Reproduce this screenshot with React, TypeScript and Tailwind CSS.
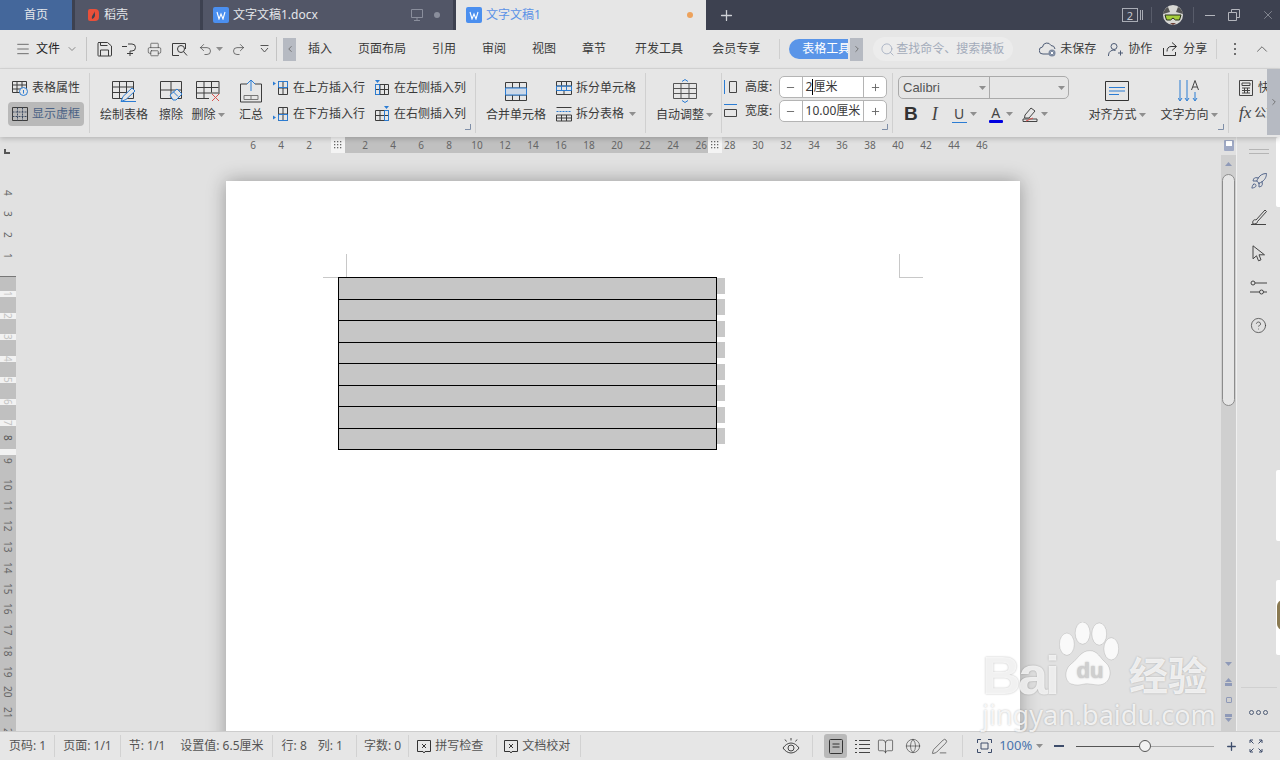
import type { ReactNode } from 'react'
import {
  BookOpen,
  ChevronDown,
  ChevronLeft,
  ChevronRight,
  ChevronUp,
  CircleHelp,
  Globe,
  Menu,
  Minus,
  PenLine,
  Plus,
  Printer,
  Redo2,
  Rocket,
  Search,
  Undo2,
  X,
} from 'lucide-react'

const ink = '#3c3c3c'
const blue = '#2b7cd3'

function Svg({ w = 16, h = 16, children }: { w?: number; h?: number; children: ReactNode }) {
  return (
    <svg width={w} height={h} viewBox={`0 0 ${w} ${h}`} fill="none" stroke={ink} strokeWidth="1" className="shrink-0">
      {children}
    </svg>
  )
}

function Caret({ className = '' }: { className?: string }) {
  return (
    <svg width="7" height="4" viewBox="0 0 7 4" className={`shrink-0 ${className}`}>
      <path d="M0 0h7L3.5 4z" fill="#8f8f8f" />
    </svg>
  )
}

function Launcher() {
  return (
    <svg width="6" height="6" viewBox="0 0 6 6" fill="none" stroke="#7f8fa8" className="absolute right-[4px] bottom-[3px]">
      <path d="M5.5 0v5.5H0" />
    </svg>
  )
}

function LargeTool({ width, icon, label, caret }: { width: string; icon: ReactNode; label: string; caret?: boolean }) {
  return (
    <div className={`${width} flex h-full shrink-0 flex-col items-center pt-[6px]`}>
      <div className="flex h-[24px] items-center">{icon}</div>
      <div className="mt-[3px] flex h-[18px] items-center gap-[2px] whitespace-nowrap">
        {label}
        {caret && <Caret />}
      </div>
    </div>
  )
}

function SmallTool({ icon, label, caret }: { icon: ReactNode; label: string; caret?: boolean }) {
  return (
    <div className="flex h-[20px] items-center gap-[4px] whitespace-nowrap">
      {icon}
      {label}
      {caret && <Caret className="ml-[1px]" />}
    </div>
  )
}

function Stepper({ value, cursor }: { value: string; cursor?: boolean }) {
  return (
    <div className="flex h-[22px] w-[108px] items-stretch rounded-[5px] border border-[#b4b4b4] bg-white">
      <div className="flex w-[23px] items-center justify-center border-r border-[#b4b4b4]">
        <Minus size={11} color="#666" strokeWidth={2} />
      </div>
      <div className="flex w-[62px] items-center pl-[3px] whitespace-nowrap">
        {cursor ? (
          <>
            2<span className="h-[16px] w-px bg-black" />
            厘米
          </>
        ) : (
          value
        )}
      </div>
      <div className="flex w-[23px] items-center justify-center border-l border-[#b4b4b4]">
        <Plus size={11} color="#666" strokeWidth={2} />
      </div>
    </div>
  )
}

function TabLogo() {
  return (
    <span className="flex h-[16px] w-[16px] shrink-0 items-center justify-center rounded-[2px] bg-[#4b8fef]">
      <svg width="10" height="9" viewBox="0 0 10 9" fill="none" stroke="white" strokeWidth="1.1">
        <path d="M1 1l2 7 2-5 2 5 2-7" />
      </svg>
    </span>
  )
}

function InsertRow({ below }: { below?: boolean }) {
  return (
    <Svg>
      <path d="M5.5 1.5h9v13h-9z" />
      <path d="M5.5 8h9M10 1.5v13" />
      {below ? (
        <>
          <path d="M5.5 8.5h9v6h-9z" stroke={blue} />
          <path d="M0 9.5l3 2-3 2z" fill={blue} stroke="none" />
        </>
      ) : (
        <>
          <path d="M5.5 1.5h9v6h-9z" stroke={blue} />
          <path d="M0 1.5l3 2-3 2z" fill={blue} stroke="none" />
        </>
      )}
    </Svg>
  )
}

function InsertCol({ right }: { right?: boolean }) {
  return (
    <Svg>
      <path d="M1.5 4.5h13v10h-13z" />
      <path d="M1.5 9.5h13M6 4.5v10M10.5 4.5v10" />
      {right ? (
        <>
          <path d="M10.5 4.5h4v10h-4z" stroke={blue} />
          <path d="M10 0h5l-2.500 3z" fill={blue} stroke="none" />
        </>
      ) : (
        <>
          <path d="M1.5 4.5h4v10h-4z" stroke={blue} />
          <path d="M1 0h5L3.500 3z" fill={blue} stroke="none" />
        </>
      )}
    </Svg>
  )
}

const topTicks = [6, 4, 2]
const bandTicks = [2, 4, 6, 8, 10, 12, 14, 16, 18, 20, 22, 24]
const endTicks = [30, 32, 34, 36, 38, 40, 42, 44, 46]

function GripCell({ width }: { width: string }) {
  return (
    <div className={`${width} flex h-full items-center justify-center bg-[#f4f4f4]`}>
      <svg width="8" height="8" viewBox="0 0 8 8" fill="#666">
        {[0, 3, 6].map((y) => [0, 3, 6].map((x) => <rect key={`${x}-${y}`} x={x} y={y} width="1.300" height="1.300" />))}
      </svg>
    </div>
  )
}

const stripes: { h: number; grey: boolean; label?: string }[] = [
  { h: 14, grey: true },
  { h: 6, grey: false, label: '1' },
  { h: 16, grey: true },
  { h: 6, grey: false, label: '2' },
  { h: 15, grey: true },
  { h: 6, grey: false, label: '3' },
  { h: 16, grey: true },
  { h: 6, grey: false, label: '4' },
  { h: 15, grey: true },
  { h: 6, grey: false, label: '5' },
  { h: 16, grey: true },
  { h: 6, grey: false, label: '6' },
  { h: 15, grey: true },
  { h: 6, grey: false, label: '7' },
  { h: 23, grey: true, label: '8' },
  { h: 6, grey: false },
]

const lowerTicks = [9, 10, 11, 12, 13, 14, 15, 16, 17, 18, 19, 20, 21, 22]
const rows = [21, 20, 21, 20, 21, 20, 21, 20]

function StatusDivider({ ml, mr }: { ml: string; mr: string }) {
  return <span className={`h-[22px] w-px bg-[#d2d2d2] ${ml} ${mr}`} />
}

function ProofIcon() {
  return (
    <svg width="14" height="15" viewBox="0 0 14 15" fill="none" stroke="#333" className="shrink-0">
      <path d="M.5 1.500h13v11H8l-1 1.500-1-1.500H.5z" />
      <path d="M5 5l4 4M9 5L5 9" />
    </svg>
  )
}

export default function App() {
  return (
    <div className="relative flex h-[760px] w-[1280px] flex-col overflow-hidden bg-[#e1e1e1] text-[12px] text-[#3a3a3a] [font-family:'Noto_Sans','Noto_Sans_CJK_SC',sans-serif]">
      {/* tab strip */}
      <div className="flex h-[30px] shrink-0 items-stretch bg-[#3d4150] text-[#e4e6ea]">
        <div className="flex w-[72px] items-center justify-center bg-[#44679b]">首页</div>
        <div className="ml-[3px] flex w-[125px] items-center gap-[5px] bg-[#525667] pl-[12px]">
          <svg width="12" height="14" viewBox="0 0 12 14">
            <path d="M3 1h5a4 4 0 0 1 4 4v4a4 4 0 0 1-4 4H3a2 2 0 0 1-2-2V3a2 2 0 0 1 2-2z" fill="#e8503a" />
            <path d="M7 3c1 3-3 4-2 8 3-1 4-4 2-8z" fill="#3d4150" />
          </svg>
          稻壳
        </div>
        <div className="ml-[3px] flex w-[250px] items-center bg-[#525667] pl-[10px]">
          <TabLogo />
          <span className="ml-[4px]">文字文稿1.docx</span>
          <svg width="14" height="13" viewBox="0 0 14 13" fill="none" stroke="#8a8e9c" className="ml-[92px]">
            <path d="M1.500.5h11v8h-11zM7 8.500v3M4 11.500h6" />
          </svg>
          <span className="ml-[10px] h-[6px] w-[6px] rounded-full bg-[#8a8e9c]" />
        </div>
        <div className="ml-[3px] flex w-[250px] items-center bg-[#e6e6e6] pl-[10px] text-[#5b93e6]">
          <TabLogo />
          <span className="ml-[4px]">文字文稿1</span>
          <span className="ml-[146px] h-[6px] w-[6px] rounded-full bg-[#eda25c]" />
        </div>
        <div className="ml-[12px] flex items-center">
          <Plus size={17} color="#cfd1d6" strokeWidth={1.8} />
        </div>
        <div className="ml-[387px] flex items-center">
          <div className="flex h-[14px] w-[16px] items-center justify-center border border-[#a9acb5] text-[11px] leading-none text-[#c6c8ce]">2</div>
          <span className="ml-[2px] h-[10px] w-px bg-[#a9acb5]" />
          <span className="ml-[1px] h-[10px] w-px bg-[#a9acb5]" />
          <span className="ml-[8px] h-[16px] w-px bg-[#585c6a]" />
          <svg width="22" height="22" viewBox="0 0 22 22" className="ml-[10px]">
            <circle cx="11" cy="11" r="10" fill="#d8d8d4" />
            <path d="M1 10a10 10 0 0 1 5-7l2 5zM21 10a10 10 0 0 0-5-7l-2 5z" fill="#555" />
            <path d="M3 11h16l-1.500 5h-4L11 14l-2.500 2h-4z" fill="#a6cf3a" stroke="#27301a" />
            <path d="M8 19h6l-3 2z" fill="#6a3c34" />
          </svg>
          <span className="ml-[9px] h-[16px] w-px bg-[#585c6a]" />
          <span className="ml-[11px] h-px w-[10px] bg-[#b4b6bd]" />
          <svg width="12" height="12" viewBox="0 0 12 12" fill="none" stroke="#b4b6bd" className="ml-[13px]">
            <path d="M.5 3.500h8v8h-8zM3.500 3.500v-3h8v8h-3" />
          </svg>
          <X size={14} color="#b4b6bd" strokeWidth={1} className="ml-[21px]" />
        </div>
      </div>

      {/* menu row */}
      <div className="flex h-[39px] shrink-0 items-center border-b border-[#d6d6d6] bg-[#e6e6e6]">
        <Menu size={16} color="#333" strokeWidth={1} className="ml-[15px]" />
        <span className="ml-[5px] text-[#222]">文件</span>
        <ChevronDown size={12} color="#888" className="ml-[6px]" />
        <span className="ml-[8px] h-[24px] w-px bg-[#c4c4c4]" />
        <svg width="15" height="15" viewBox="0 0 15 15" fill="none" stroke={ink} className="ml-[10px]">
          <path d="M1.500.5h9l4 3.500v9a1 1 0 0 1-1 1h-12a.5.5 0 0 1-.5-.5V1.500a1 1 0 0 1 1-1z" />
          <path d="M3.500.5v3h7M3.500 14V8h8v6" />
        </svg>
        <svg width="15" height="15" viewBox="0 0 15 15" fill="none" stroke={ink} className="ml-[10px]">
          <path d="M0 4.500h5M6 2h4a3.500 3.500 0 0 1 0 7H8v5M5 11.500h6" />
        </svg>
        <Printer size={15} color={ink} strokeWidth={1} className="ml-[10px]" />
        <svg width="16" height="15" viewBox="0 0 16 15" fill="none" stroke={ink} className="ml-[10px]">
          <path d="M13.500 7V1.500h-13v12H7" />
          <circle cx="9" cy="7" r="3.500" />
          <path d="M11.500 9.500L15 13.500" />
        </svg>
        <Undo2 size={15} color={ink} strokeWidth={1.1} className="ml-[10px]" />
        <Caret className="ml-[3px]" />
        <Redo2 size={15} color={ink} strokeWidth={1.1} className="ml-[8px]" />
        <svg width="9" height="8" viewBox="0 0 9 8" fill="none" stroke="#555" className="ml-[14px]">
          <path d="M.5 .5h8M1 3l3.500 4L8 3" />
        </svg>
        <span className="ml-[7px] h-[24px] w-px bg-[#c4c4c4]" />
        <div className="ml-[6px] flex h-[23px] w-[13px] items-center justify-center bg-[#b6bac2]">
          <ChevronLeft size={10} color="#666" />
        </div>
        <span className="ml-[12px]">插入</span>
        <span className="ml-[26px]">页面布局</span>
        <span className="ml-[26px]">引用</span>
        <span className="ml-[26px]">审阅</span>
        <span className="ml-[26px]">视图</span>
        <span className="ml-[26px]">章节</span>
        <span className="ml-[29px]">开发工具</span>
        <span className="ml-[29px]">会员专享</span>
        <span className="ml-[19px] h-[20px] w-px bg-[#cfcfcf]" />
        <div className="ml-[9px] flex h-[20px] w-[59px] items-center overflow-hidden rounded-l-[10px] bg-[#5a95e8] pl-[13px] whitespace-nowrap text-white">
          表格工具
        </div>
        <div className="ml-[2px] flex h-[23px] w-[13px] items-center justify-center bg-[#b6bac2]">
          <ChevronRight size={10} color="#666" />
        </div>
        <div className="ml-[10px] flex h-[24px] w-[140px] items-center rounded-[12px] bg-[#ececec] pl-[7px] whitespace-nowrap text-[#a3abba]">
          <Search size={15} color="#9aa6bb" strokeWidth={1.2} />
          <span className="ml-[1px]">查找命令、搜索模板</span>
        </div>
        <svg width="18" height="16" viewBox="0 0 18 16" fill="none" stroke="#4d5b75" className="ml-[26px]">
          <path d="M10 13H4a3.500 3.500 0 0 1-.500-7A4.500 4.500 0 0 1 12 4.500 4 4 0 0 1 16 8" />
          <circle cx="13" cy="12" r="3.500" fill="#7d8aa0" stroke="none" />
          <path d="M11.800 10.800l2.400 2.400M14.200 10.800l-2.400 2.400" stroke="white" />
        </svg>
        <span className="ml-[3px]">未保存</span>
        <svg width="15" height="15" viewBox="0 0 15 15" fill="none" stroke="#4d5b75" className="ml-[12px]">
          <circle cx="6" cy="4.500" r="3" />
          <path d="M.5 14v-1a5 5 0 0 1 7-4.500M10 11h5M12.500 8.500v5" />
        </svg>
        <span className="ml-[5px]">协作</span>
        <svg width="15" height="14" viewBox="0 0 15 14" fill="none" stroke="#333" className="ml-[11px]">
          <path d="M.5 6v7.500h12V10M9 .5l4.500 4L9 8.500M13 4.500H8C5.500 4.500 4 6.500 4 9.500" />
        </svg>
        <span className="ml-[5px]">分享</span>
        <span className="ml-[9px] h-[20px] w-px bg-[#cfcfcf]" />
        <svg width="4" height="14" viewBox="0 0 4 14" fill="#444" className="ml-[16px]">
          <circle cx="2" cy="2" r="1" />
          <circle cx="2" cy="7" r="1" />
          <circle cx="2" cy="12" r="1" />
        </svg>
        <ChevronUp size={18} color="#444" strokeWidth={1} className="ml-[16px]" />
      </div>

      {/* ribbon */}
      <div className="z-10 flex h-[68px] shrink-0 items-stretch bg-[#e6e6e6] shadow-[0_2px_5px_rgba(0,0,0,0.18)]">
        <div className="my-[4px] flex w-[90px] shrink-0 flex-col border-r border-[#d0d0d0] pt-[5px]">
          <div className="ml-[12px]">
            <SmallTool
              label="表格属性"
              icon={
                <Svg>
                  <path d="M.5 1.500h14v11H.5zM.5 5h14M.5 9h14M5 1.500v11M10 1.500v11" />
                  <circle cx="11.500" cy="11.500" r="4" fill="#e6e6e6" stroke={blue} />
                  <path d="M11.500 10v3.500" stroke={blue} />
                </Svg>
              }
            />
          </div>
          <div className="mt-[4px] ml-[8px] flex h-[24px] w-[76px] items-center gap-[4px] rounded-[4px] bg-[#b9b9b9] pl-[4px] whitespace-nowrap text-[#4b6285]">
            <Svg>
              <path d="M.5 1.500h15v13H.5z" />
              <path d="M.5 6h15M.5 10.500h15M5.500 1.500v13M10.500 1.500v13" stroke="#3c4a60" strokeDasharray="2 1" />
            </Svg>
            显示虚框
          </div>
        </div>

        <div className="relative my-[4px] flex w-[386px] shrink-0 border-r border-[#d0d0d0]">
          <LargeTool
            width="w-[68px]"
            label="绘制表格"
            icon={
              <Svg w={24} h={22}>
                <path d="M.5 1.500h21v17H.5zM.5 7h21M.5 12.500h21M7.500 1.500v17M14.500 1.500v17" />
                <path d="M9 21.500l2-5L20 8l3 3-9 8.500zM9 21.500h15" stroke={blue} fill="#e6e6e6" />
              </Svg>
            }
          />
          <LargeTool
            width="w-[26px]"
            label="擦除"
            icon={
              <Svg w={24} h={22}>
                <path d="M1.500 1.500h21v17h-21zM1.500 10h21M12 1.500v17" />
                <path d="M11 15l7-6 5 5-6 6h-3z" stroke={blue} fill="#e6e6e6" />
                <path d="M14 11.500l5 5" stroke={blue} />
              </Svg>
            }
          />
          <LargeTool
            width="w-[48px]"
            caret
            label="删除"
            icon={
              <Svg w={24} h={22}>
                <path d="M23 14V1.500H.5v17H13M.5 7.500h22M.5 13h22M8 1.500v17M15.500 1.500v11" />
                <path d="M16 14l7 7M23 14l-7 7" stroke="#d9534f" />
              </Svg>
            }
          />
          <LargeTool
            width="w-[38px]"
            label="汇总"
            icon={
              <Svg w={24} h={24}>
                <path d="M8 5H1.500v18h21V5H16" />
                <path d="M12 1v11M8 5l4-4 4 4" stroke={blue} />
                <path d="M5 16.500h14v4H5zM12 16.500v4" stroke="#777" />
              </Svg>
            }
          />
          <div className="ml-[3px] flex w-[101px] flex-col gap-[6px] pt-[5px]">
            <SmallTool label="在上方插入行" icon={<InsertRow />} />
            <SmallTool label="在下方插入行" icon={<InsertRow below />} />
          </div>
          <div className="flex flex-col gap-[6px] pt-[5px]">
            <SmallTool label="在左侧插入列" icon={<InsertCol />} />
            <SmallTool label="在右侧插入列" icon={<InsertCol right />} />
          </div>
          <Launcher />
        </div>

        <div className="my-[4px] flex w-[170px] shrink-0 border-r border-[#d0d0d0] pl-[10px]">
          <LargeTool
            width="w-[60px]"
            label="合并单元格"
            icon={
              <Svg w={24} h={21}>
                <path d="M1.500 1.500h21v18h-21zM1.500 7h21M1.500 14h21M8.500 1.500V7M15.500 1.500V7M8.500 14v5.500M15.500 14v5.500" />
                <path d="M1.500 7h21v7h-21z" fill="#cdd9e8" stroke={blue} />
              </Svg>
            }
          />
          <div className="ml-[10px] flex flex-col gap-[6px] pt-[5px]">
            <SmallTool
              label="拆分单元格"
              icon={
                <Svg>
                  <path d="M.5 1.500h15v13H.5zM.5 6h15M.5 10.500h15M5.500 1.500V6M10.500 1.500V6M8 10.500v4" />
                  <path d="M.5 6h15v4.500H.5zM5.500 6v4.500M10.500 6v4.500" stroke={blue} />
                </Svg>
              }
            />
            <SmallTool
              label="拆分表格"
              caret
              icon={
                <Svg>
                  <path d="M.5 1.500h15" />
                  <path d="M.5 5.500h15" stroke={blue} strokeDasharray="2 1" />
                  <path d="M.5 9h15v6H.5zM.5 12h15M5.500 9v6M10.500 9v6" />
                </Svg>
              }
            />
          </div>
        </div>

        <div className="my-[4px] flex w-[76px] shrink-0 border-r border-[#d0d0d0] pl-[10px]">
          <LargeTool
            width="w-[57px]"
            label="自动调整"
            caret
            icon={
              <Svg w={24} h={24}>
                <path d="M.5 4.500h23v15H.5zM.5 9.500h23M.5 14.500h23M8 4.500v15M16 4.500v15" stroke="#555" />
                <path d="M9 2.500L12 .5l3 2M9 21.500l3 2 3-2" stroke={blue} />
              </Svg>
            }
          />
        </div>

        <div className="relative my-[4px] flex w-[171px] shrink-0 flex-col gap-[2px] border-r border-[#d0d0d0] pt-[3px]">
          <div className="flex items-center">
            <svg width="13" height="14" viewBox="0 0 13 14" fill="none" stroke="#444" className="ml-[2px] shrink-0">
              <path d="M.5 0v14" stroke={blue} />
              <path d="M5.500 1.500h7v11h-7z" />
            </svg>
            <span className="ml-[8px] w-[34px] whitespace-nowrap">高度:</span>
            <Stepper value="2厘米" cursor />
          </div>
          <div className="flex items-center">
            <svg width="13" height="14" viewBox="0 0 13 14" fill="none" stroke="#444" className="ml-[2px] shrink-0">
              <path d="M0 .5h13" stroke={blue} />
              <path d="M.5 5.500h12v7H.5z" />
            </svg>
            <span className="ml-[8px] w-[34px] whitespace-nowrap">宽度:</span>
            <Stepper value="10.00厘米" />
          </div>
          <Launcher />
        </div>

        <div className="relative my-[4px] flex w-[336px] shrink-0 border-r border-[#d0d0d0]">
          <div className="ml-[5px] flex w-[171px] shrink-0 flex-col pt-[3px]">
            <div className="flex h-[23px] items-stretch rounded-[5px] border border-[#aaa]">
              <div className="flex w-[91px] items-center justify-between border-r border-[#aaa] pr-[3px] pl-[4px] [font-family:'Liberation_Sans',sans-serif] text-[13px] text-[#555]">
                Calibri
                <Caret />
              </div>
              <div className="flex flex-1 items-center justify-end pr-[3px]">
                <Caret />
              </div>
            </div>
            <div className="mt-[4px] flex h-[22px] items-center">
              <span className="ml-[6px] [font-family:'Liberation_Sans',sans-serif] text-[19px] font-bold text-[#333]">B</span>
              <span className="ml-[14px] [font-family:'Liberation_Serif',serif] text-[18px] text-[#444] italic">I</span>
              <div className="ml-[14px] flex flex-col items-center">
                <span className="text-[14px] leading-[16px] text-[#444]">U</span>
                <span className="h-[1px] w-[15px] bg-[#2b7cd3]" />
              </div>
              <Caret className="ml-[3px]" />
              <div className="ml-[12px] flex flex-col items-center">
                <span className="text-[14px] leading-[15px] text-[#444]">A</span>
                <span className="h-[3px] w-[14px] rounded-[1px] bg-[#0000e0]" />
              </div>
              <Caret className="ml-[3px]" />
              <svg width="16" height="16" viewBox="0 0 16 16" fill="none" stroke="#444" className="ml-[9px]">
                <path d="M3 9l6-7 4 3-6 7H2.500z" />
                <path d="M1 13h14v2.500H1z" />
                <path d="M4 15l7-3" stroke="#d9534f" />
              </svg>
              <Caret className="ml-[3px]" />
            </div>
          </div>
          <LargeTool
            width="w-[92px] ml-[2px]"
            caret
            label="对齐方式"
            icon={
              <svg width="24" height="20" viewBox="0 0 24 20" fill="none" stroke="#333">
                <path d="M.5.5h23v19H.5z" />
                <path d="M4 6.500h16M4 10h16M4 13.500h10" stroke={blue} />
              </svg>
            }
          />
          <LargeTool
            width="w-[52px]"
            caret
            label="文字方向"
            icon={
              <svg width="22" height="22" viewBox="0 0 22 22" fill="none" stroke={blue}>
                <path d="M2 0v20M0 18l2 3 2-3M9 0v20M7 18l2 3 2-3M17 12v8M15 18l2 3 2-3" />
                <path d="M13.500 10L17 .5 20.500 10M15 7h4" stroke="#444" />
              </svg>
            }
          />
          <Launcher />
        </div>

        <div className="my-[4px] flex w-[38px] shrink-0 flex-col gap-[7px] overflow-hidden pt-[6px] pl-[10px] whitespace-nowrap">
          <div className="flex items-center gap-[5px]">
            <svg width="14" height="16" viewBox="0 0 14 16" fill="none" stroke="#444" className="shrink-0">
              <path d="M.5.5h13v15H.5zM3 3h8v2.500H3zM3 8h8M3 10.500h8M3 13h8M5.500 8v5M8.500 8v5" />
            </svg>
            快速
          </div>
          <div className="flex items-center gap-[3px]">
            <span className="[font-family:'Liberation_Serif',serif] text-[17px] leading-[18px] text-[#444] italic">fx</span>
            公式
          </div>
        </div>
        <div className="mb-[2px] flex w-[13px] items-center justify-center bg-[#b6bac2]">
          <ChevronRight size={10} color="#666" />
        </div>
      </div>

      {/* document area */}
      <div className="flex min-h-0 flex-1">
        <div className="flex w-[16px] shrink-0 flex-col text-[10px] text-[#666]">
          <div className="h-[16px] shrink-0">
            <span className="mt-[12px] ml-[4px] block h-[5px] w-[6px] border-b-2 border-l-2 border-[#555]" />
          </div>
          <div className="flex h-[123px] shrink-0 flex-col items-center pt-[37px]">
            {[4, 3, 2, 1].map((n) => (
              <span key={n} className="flex h-[21px] items-center leading-none [writing-mode:vertical-rl]">
                {n}
              </span>
            ))}
          </div>
          <div className="flex shrink-0 flex-col border-t border-[#777]">
            {stripes.map((s, i) => (
              <div
                key={i}
                style={{ height: s.h }}
                className={`flex items-center justify-center overflow-hidden leading-none [writing-mode:vertical-rl] ${s.grey ? 'bg-[#c0c0c0] text-[#555]' : 'bg-[#f2f2f2] text-[#c4c4c4]'}`}
              >
                {s.label}
              </div>
            ))}
          </div>
          <div className="flex flex-1 flex-col items-center overflow-hidden bg-[#c0c0c0] pt-[3px]">
            {lowerTicks.map((n) => (
              <span key={n} className="flex h-[20.75px] shrink-0 items-center leading-none [writing-mode:vertical-rl]">
                {n}
              </span>
            ))}
          </div>
        </div>

        <div className="flex w-[1205px] shrink-0 flex-col">
          <div className="flex h-[16px] shrink-0 items-center text-[10px] text-[#666]">
            <div className="w-[223px] shrink-0" />
            {topTicks.map((n) => (
              <span key={n} className="w-[28px] text-center">
                {n}
              </span>
            ))}
            <div className="w-[8px]" />
            <GripCell width="w-[14px]" />
            <div className="flex h-full w-[363px] items-center bg-[#c0c0c0] pl-[6px]">
              {bandTicks.map((n) => (
                <span key={n} className="w-[28px] shrink-0 text-center">
                  {n}
                </span>
              ))}
              <span className="w-[21px] shrink-0 pr-[1px] text-right">26</span>
            </div>
            <GripCell width="w-[14px]" />
            <span className="w-[22px] pl-[2px]">28</span>
            {endTicks.map((n) => (
              <span key={n} className="w-[28px] text-center">
                {n}
              </span>
            ))}
          </div>
          <div className="min-h-0 flex-1 overflow-hidden pt-[28px] pl-[210px]">
            <div className="h-[600px] w-[794px] bg-white pt-[73px] pl-[97px] shadow-[0_0_18px_rgba(0,0,0,0.32)]">
              <div className="flex w-[600px] justify-between">
                <span className="h-[24px] w-[24px] border-r border-b border-[#c8c8c8]" />
                <span className="h-[24px] w-[24px] border-b border-l border-[#c8c8c8]" />
              </div>
              <div className="-mt-[1px] ml-[15px] flex w-[388px] flex-col items-start">
                {rows.map((h, i) => (
                  <div key={i} className="flex items-start">
                    <div
                      style={{ height: i === 0 ? h + 2 : h + 1 }}
                      className={`w-[379px] border-r border-b border-l border-black bg-[#c6c6c6] ${i === 0 ? 'border-t' : ''}`}
                    />
                    <div className={`h-[16px] w-[8px] bg-[#c8c8c8] ${i === 0 ? 'mt-[1px]' : i % 2 === 1 ? '-mt-[1px]' : ''}`} />
                  </div>
                ))}
              </div>
            </div>
          </div>
        </div>

        <div className="flex w-[15px] shrink-0 flex-col items-center">
          <div className="mt-[3px] flex h-[11px] w-[10px] flex-col items-center rounded-[1px] bg-[#9fa9c4] pt-[1px]">
            <span className="h-[5px] w-[6px] bg-white" />
          </div>
          <div className="mt-[4px] flex w-full flex-1 flex-col items-center bg-[#cfcfcf] pt-[7px]">
            <svg width="7" height="4" viewBox="0 0 7 4">
              <path d="M0 4h7L3.500 0z" fill="#8f9ab8" />
            </svg>
            <div className="mt-[8px] h-[232px] w-[13px] rounded-[7px] border border-[#8c8c8c] bg-[#e6e6e6]" />
            <svg width="7" height="4" viewBox="0 0 7 4" className="mt-[256px]">
              <path d="M0 0h7L3.500 4z" fill="#8f9ab8" />
            </svg>
            <svg width="7" height="8" viewBox="0 0 7 8" className="mt-[12px]">
              <path d="M0 4h7L3.500 0zM0 8h7V5H0z" fill="#8f9ab8" />
            </svg>
            <span className="mt-[11px] h-[6px] w-[6px] rounded-[1px] border border-[#8f9ab8]" />
            <svg width="7" height="8" viewBox="0 0 7 8" className="mt-[11px]">
              <path d="M0 0h7v3H0zM0 4h7L3.500 8z" fill="#8f9ab8" />
            </svg>
          </div>
        </div>

        <div className="flex w-[44px] shrink-0 flex-col items-center border-l border-[#efefef] bg-[#e0e0e0]">
          <div className="mt-[12px] flex flex-col gap-[3px]">
            <span className="h-px w-[20px] bg-[#b5b5b5]" />
            <span className="h-px w-[20px] bg-[#b5b5b5]" />
          </div>
          <Rocket size={18} color="#4f6288" strokeWidth={1.3} className="mt-[18px]" />
          <svg width="17" height="16" viewBox="0 0 17 16" fill="none" stroke="#444" className="mt-[19px]">
            <path d="M1 15.500h15M3 15c-1-3 1-5 3-4l9-10 1.500 1.500-9 10c0 2-2 2.500-4.500 2.500z" />
          </svg>
          <svg width="14" height="17" viewBox="0 0 14 17" fill="none" stroke="#444" className="mt-[20px]">
            <path d="M1 .8v13l3.500-3 2 5 2.500-1-2-5h5.500z" />
          </svg>
          <svg width="17" height="15" viewBox="0 0 17 15" fill="none" stroke="#444" className="mt-[18px]">
            <circle cx="3" cy="3" r="2" />
            <circle cx="11.500" cy="12" r="2" />
            <path d="M5 3h12M0 12h9.500M13.500 12H17" />
          </svg>
          <CircleHelp size={17} color="#444" strokeWidth={1.1} className="mt-[22px]" />
          <div className="mt-[353px] h-px w-[36px] bg-[#d0d0d0]" />
          <div className="mt-[22px] flex gap-[2px]">
            <span className="h-[5px] w-[5px] rounded-full border border-[#4d5b75]" />
            <span className="h-[5px] w-[5px] rounded-full border border-[#4d5b75]" />
            <span className="h-[5px] w-[5px] rounded-full border border-[#4d5b75]" />
          </div>
        </div>
      </div>

      {/* status bar */}
      <div className="z-10 flex h-[29px] shrink-0 items-center border-t border-[#cdcdcd] bg-[#e6e6e6] whitespace-nowrap text-[#555]">
        <span className="ml-[9px]">页码: 1</span>
        <StatusDivider ml="ml-[8px]" mr="mr-[8px]" />
        <span>页面: 1/1</span>
        <StatusDivider ml="ml-[8px]" mr="mr-[8px]" />
        <span>节: 1/1</span>
        <span className="ml-[15px]">设置值: 6.5厘米</span>
        <StatusDivider ml="ml-[8px]" mr="mr-[9px]" />
        <span>行: 8</span>
        <span className="ml-[11px]">列: 1</span>
        <StatusDivider ml="ml-[13px]" mr="mr-[7px]" />
        <span>字数: 0</span>
        <StatusDivider ml="ml-[7px]" mr="mr-[8px]" />
        <ProofIcon />
        <span className="ml-[4px]">拼写检查</span>
        <StatusDivider ml="ml-[13px]" mr="mr-[7px]" />
        <ProofIcon />
        <span className="ml-[4px]">文档校对</span>
        <StatusDivider ml="ml-[10px]" mr="mr-[0px]" />

        <svg width="18" height="16" viewBox="0 0 18 16" fill="none" stroke="#444" className="ml-[201px]">
          <path d="M1 10c2-3 5-5 8-5s6 2 8 5c-2 3-5 5-8 5s-6-2-8-5z" />
          <circle cx="9" cy="10" r="3" />
          <path d="M9 0v2.500M3 1.500l1.500 2M15 1.500l-1.500 2" />
        </svg>
        <StatusDivider ml="ml-[12px]" mr="mr-[11px]" />
        <div className="flex h-[24px] w-[23px] items-center justify-center rounded-[3px] bg-[#b9b9b9]">
          <svg width="14" height="15" viewBox="0 0 14 15" fill="none" stroke="#333">
            <path d="M1.500.5h11a1 1 0 0 1 1 1v12a1 1 0 0 1-1 1h-11a1 1 0 0 1-1-1v-12a1 1 0 0 1 1-1zM3.500 5h7M3.500 8h7" />
          </svg>
        </div>
        <svg width="15" height="13" viewBox="0 0 15 13" fill="none" stroke="#444" className="ml-[8px]">
          <path d="M4 .5h11M4 4.500h11M4 8.500h11M4 12.500h11M0 .5h2M0 4.500h2M0 8.500h2M0 12.500h2" />
        </svg>
        <BookOpen size={17} color="#444" strokeWidth={1} className="ml-[7px]" />
        <Globe size={16} color="#444" strokeWidth={1} className="ml-[11px]" />
        <PenLine size={17} color="#444" strokeWidth={1} className="ml-[10px]" />
        <StatusDivider ml="ml-[14px]" mr="mr-[14px]" />
        <svg width="15" height="14" viewBox="0 0 15 14" fill="none" stroke="#3e4d6b">
          <path d="M.5 4V.5H4M11 .5h3.500V4M14.500 10v3.500H11M4 13.500H.5V10M4 4h7v6H4z" />
        </svg>
        <span className="ml-[7px] text-[13px] text-[#4a74ad]">100%</span>
        <Caret className="ml-[4px]" />
        <span className="ml-[11px] h-[2px] w-[10px] bg-[#3e4d6b]" />
        <div className="ml-[12px] flex w-[138px] items-center">
          <span className="h-px w-[63px] bg-[#555]" />
          <span className="h-[12px] w-[12px] rounded-full border border-[#555] bg-[#f3f3f3]" />
          <span className="h-px flex-1 bg-[#a8a8a8]" />
        </div>
        <Plus size={13} color="#3e4d6b" strokeWidth={2.4} className="ml-[11px]" />
        <svg width="14" height="14" viewBox="0 0 14 14" fill="none" stroke="#3e4d6b" className="ml-[11px]">
          <path d="M1 1l3.500 3.500M1 4V1h3M13 1L9.500 4.500M13 4V1h-3M1 13l3.500-3.500M1 10v3h3M13 13L9.500 9.500M13 10v3h-3" />
        </svg>
      </div>

      {/* panels peeking in from the right edge */}
      <div className="absolute top-[137px] right-0 h-[70px] w-[4px] rounded-l-[2px] bg-white" />
      <div className="absolute top-[470px] right-0 h-[71px] w-[4px] rounded-l-[2px] bg-white" />
      <div className="absolute top-[580px] right-0 h-[75px] w-[4px] overflow-hidden rounded-l-[2px] bg-white">
        <span className="mt-[20px] ml-[1px] block h-[30px] w-[12px] rounded-full bg-[#8a7a52]" />
      </div>

      {/* watermark */}
      <div className="pointer-events-none absolute top-[620px] left-[982px] z-20 w-[235px] text-white/80 [text-shadow:0_0_2px_rgba(0,0,0,0.28)]">
        <div className="flex h-[76px] items-end">
          <span className="[font-family:'Liberation_Sans',sans-serif] text-[54px] leading-[42px] font-bold tracking-[-3px]">Bai</span>
          <svg width="68" height="74" viewBox="0 0 68 80" className="-ml-[1px]" fill="rgba(255,255,255,0.8)" stroke="rgba(0,0,0,0.12)">
            <ellipse cx="9" cy="24" rx="8" ry="12" />
            <ellipse cx="26" cy="12" rx="8" ry="12" />
            <ellipse cx="44" cy="13" rx="8" ry="12" />
            <ellipse cx="57" cy="29" rx="8" ry="12" />
            <path d="M34 31c8 0 11 8 17 13 8 7 6 24-8 24-6 0-11-2-15-1-5 1-9 2-14 0C7 65 5 52 14 45c7-5 10-14 20-14z" />
            <text x="34" y="61" textAnchor="middle" fill="#cfcfcf" stroke="none" fontSize="24" fontWeight="700" fontFamily="Liberation Sans">
              du
            </text>
          </svg>
          <span className="ml-[5px] text-[39px] leading-[42px] font-bold">经验</span>
        </div>
        <div className="mt-[4px] h-[30px] text-[27px] leading-[30px] whitespace-nowrap">jingyan.baidu.com</div>
      </div>
    </div>
  )
}
